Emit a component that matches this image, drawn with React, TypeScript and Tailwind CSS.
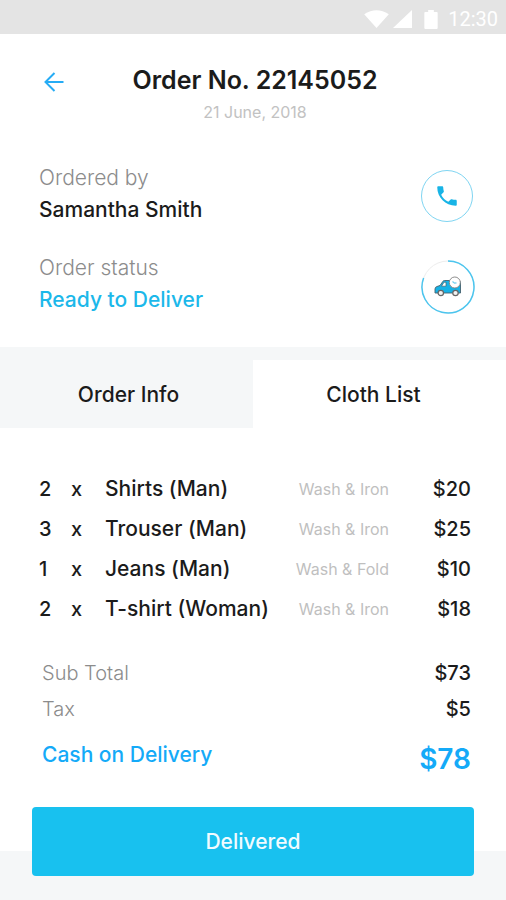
import { useState } from "react";

type Item = { qty: number; name: string; service: string; price: string };

const items: Item[] = [
  { qty: 2, name: "Shirts (Man)", service: "Wash & Iron", price: "$20" },
  { qty: 3, name: "Trouser (Man)", service: "Wash & Iron", price: "$25" },
  { qty: 1, name: "Jeans (Man)", service: "Wash & Fold", price: "$10" },
  { qty: 2, name: "T-shirt (Woman)", service: "Wash & Iron", price: "$18" },
];

const tabs = [
  { label: "Order Info", inset: "pl-1" },
  { label: "Cloth List", inset: "pr-3" },
];

function StatusBar() {
  return (
    <div className="flex h-[34px] items-center justify-end bg-[#e4e4e4] pr-2 pt-1 font-['Roboto',sans-serif] text-[20px] text-white">
      <svg className="h-[18px] w-[25px]" viewBox="0 0 26 19" fill="currentColor" aria-hidden="true">
        <path d="M0 4.500Q13-4 26 4.500L13 19Z" />
      </svg>
      <svg className="ml-1 h-[18px] w-[19px]" viewBox="0 0 20 19" fill="currentColor" aria-hidden="true">
        <path d="M20 0V19H0Z" />
      </svg>
      <svg className="ml-3 h-[19px] w-[14px]" viewBox="0 0 14 20" fill="currentColor" aria-hidden="true">
        <path d="M4 0h6v2h3q1 0 1 1v16q0 1-1 1H1q-1 0-1-1V3q0-1 1-1h3Z" />
      </svg>
      <span className="ml-[10px]">12:30</span>
    </div>
  );
}

function VanIcon() {
  return (
    <svg className="h-[22px] w-7" viewBox="0 0 28 22" aria-hidden="true">
      <path
        d="M1 17V13Q1 11 3 10.500L6 9.500L9 5.200Q9.600 4.500 10.500 4.500H24Q26.500 4.500 26.500 7V17Z"
        fill="#16b2e6"
        stroke="#44616e"
        strokeWidth=".9"
      />
      <path d="M7.500 10.200L10 6.200H12V10.200Z" fill="#fff" stroke="#44616e" strokeWidth=".7" />
      <circle cx="6.800" cy="17" r="2.700" fill="#f2f2f2" stroke="#666" strokeWidth="1.200" />
      <circle cx="21.500" cy="17" r="2.700" fill="#f2f2f2" stroke="#666" strokeWidth="1.200" />
      <circle cx="20.800" cy="6.500" r="5.500" fill="#fff" stroke="#808080" strokeWidth=".9" />
      <path d="M18.500 5.500L20.500 7.200L22.500 6.800" fill="none" stroke="#6fcdee" strokeWidth="1.200" />
    </svg>
  );
}

export default function App() {
  const [active, setActive] = useState("Cloth List");

  return (
    <div className="flex min-h-screen flex-col bg-white font-['Inter',sans-serif] text-[#1b1b1b]">
      <StatusBar />

      <header className="grid grid-cols-[84px_1fr_80px] pt-[30px] text-center">
        <button type="button" aria-label="Back" className="flex h-9 items-center pl-11 text-[#26acf5]">
          <svg className="h-5 w-5" viewBox="0 0 20 20" fill="none" stroke="currentColor" strokeWidth="2" aria-hidden="true">
            <path d="M19.500 10H2M10.500 1L1.500 10L10.500 19" />
          </svg>
        </button>
        <div>
          <h1 className="text-[25px] font-semibold leading-8">Order No. 22145052</h1>
          <p className="mt-[6px] text-base leading-5 text-[#c2c2c2]">21 June, 2018</p>
        </div>
      </header>

      <section className="flex flex-col gap-[26px] pb-[31px] pl-[39px] pr-[31px] pt-10 text-[21px] leading-8">
        <div className="flex items-start justify-between">
          <div>
            <p className="font-light text-[#8c8c8c]">Ordered by</p>
            <p className="font-medium">Samantha Smith</p>
          </div>
          <div className="mt-2 w-[54px]">
            <button
              type="button"
              aria-label="Call customer"
              className="flex h-[52px] w-[52px] items-center justify-center rounded-full border border-[#7fd5f2] text-[#18b4e6]"
            >
              <svg className="h-[26px] w-[26px]" viewBox="0 0 24 24" fill="currentColor" aria-hidden="true">
                <path d="M6.620 10.790c1.440 2.830 3.760 5.140 6.590 6.590l2.200-2.200c.27-.27.67-.36 1.020-.24 1.120.37 2.330.57 3.570.57.55 0 1 .45 1 1V20c0 .55-.45 1-1 1-9.390 0-17-7.610-17-17 0-.55.45-1 1-1h3.500c.55 0 1 .45 1 1 0 1.250.2 2.450.57 3.570.11.35.03.74-.25 1.020z" />
              </svg>
            </button>
          </div>
        </div>
        <div className="flex items-start justify-between">
          <div>
            <p className="font-light text-[#8c8c8c]">Order status</p>
            <p className="font-medium text-[#1cb8ea]">Ready to Deliver</p>
          </div>
          <div className="mt-2 grid h-[54px] w-[54px] place-items-center">
            <svg className="col-start-1 row-start-1 h-[54px] w-[54px]" viewBox="0 0 54 54" fill="none" aria-hidden="true">
              <circle cx="27" cy="27" r="26" stroke="#ededed" />
              <path d="M27 1A26 26 0 1 1 2.600 18" stroke="#4cc5ee" strokeWidth="1.500" />
            </svg>
            <span className="col-start-1 row-start-1">
              <VanIcon />
            </span>
          </div>
        </div>
      </section>

      <div role="tablist" className="grid grid-cols-2 bg-[#f5f7f8] pt-[13px]">
        {tabs.map(({ label, inset }) => (
          <button
            key={label}
            type="button"
            role="tab"
            aria-selected={active === label}
            onClick={() => setActive(label)}
            className={`h-[68px] pt-[2px] text-[21px] font-medium ${inset} ${active === label ? "bg-white" : "bg-[#f5f7f8]"}`}
          >
            {label}
          </button>
        ))}
      </div>

      <main className="pb-[68px] pr-[35px] pt-[41px] text-xl">
        <div className="pl-[39px]">
          <table className="w-full font-medium leading-10">
            <tbody>
              {items.map((item) => (
                <tr key={item.name}>
                  <td className="w-8 p-0">{item.qty}</td>
                  <td className="w-[34px] p-0">x</td>
                  <td className="whitespace-nowrap p-0 text-[21px] leading-10">{item.name}</td>
                  <td className="whitespace-nowrap p-0 text-right text-base font-normal leading-10 text-[#bfbfbf]">{item.service}</td>
                  <td className="w-[82px] p-0 text-right">{item.price}</td>
                </tr>
              ))}
            </tbody>
          </table>
        </div>
        <dl className="mt-[26px] pl-[42px] leading-9">
          <div className="flex justify-between">
            <dt className="font-light text-[#8c8c8c]">Sub Total</dt>
            <dd className="font-medium">$73</dd>
          </div>
          <div className="flex justify-between">
            <dt className="font-light text-[#8c8c8c]">Tax</dt>
            <dd className="font-medium">$5</dd>
          </div>
          <div className="flex h-14 items-center justify-between font-medium text-[#14aaf8]">
            <dt className="text-[21px]">Cash on Delivery</dt>
            <dd className="mt-2 text-[28px] font-semibold">$78</dd>
          </div>
        </dl>
      </main>

      <footer className="flex-1 bg-[#f5f7f8] px-8 pb-6">
        <button type="button" className="-mt-11 block h-[69px] w-full rounded bg-[#18c1ef] text-[21px] font-medium text-[#f0fbff]">
          Delivered
        </button>
      </footer>
    </div>
  );
}
